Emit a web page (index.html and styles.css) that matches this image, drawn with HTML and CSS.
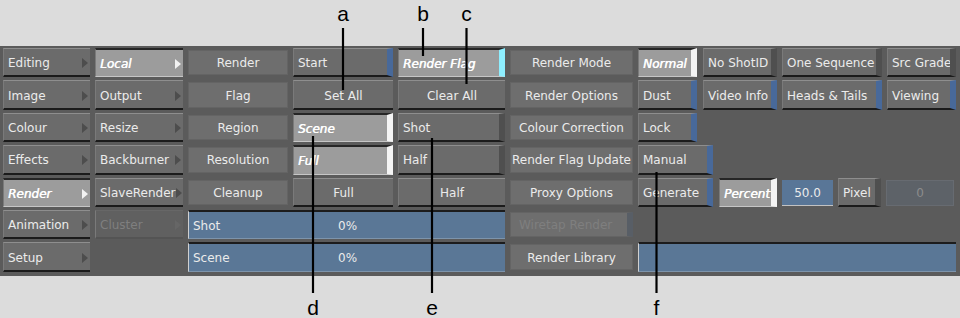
FILE: index.html
```html
<!DOCTYPE html>
<html lang="en">
<head>
  <meta charset="UTF-8">
  <title>Render</title>
  <link rel="stylesheet" href="styles.css">
</head>
<body>
  <div class="panel">
    <!-- row 1 -->
    <div class="btn arrow">Editing</div>
    <div class="btn arrow sel">Local</div>
    <div class="lbl">Render</div>
    <div class="btn tog on">Start</div>
    <div class="btn tog sel cyan">Render Flag</div>
    <div class="lbl">Render Mode</div>
    <div class="right">
      <div class="btn tog sel w59">Normal</div>
      <div class="btn tog w74">No ShotID</div>
      <div class="btn tog w100">One Sequence</div>
      <div class="btn tog w69">Src Grade</div>
    </div>

    <!-- row 2 -->
    <div class="btn arrow">Image</div>
    <div class="btn arrow">Output</div>
    <div class="lbl">Flag</div>
    <div class="btn center">Set All</div>
    <div class="btn center">Clear All</div>
    <div class="lbl">Render Options</div>
    <div class="right">
      <div class="btn tog on w59">Dust</div>
      <div class="btn tog on w74">Video Info</div>
      <div class="btn tog on w100">Heads &amp; Tails</div>
      <div class="btn tog on w69">Viewing</div>
    </div>

    <!-- row 3 -->
    <div class="btn arrow">Colour</div>
    <div class="btn arrow">Resize</div>
    <div class="lbl">Region</div>
    <div class="btn tog sel">Scene</div>
    <div class="btn tog">Shot</div>
    <div class="lbl">Colour Correction</div>
    <div class="right">
      <div class="btn tog on w59">Lock</div>
    </div>

    <!-- row 4 -->
    <div class="btn arrow">Effects</div>
    <div class="btn arrow">Backburner</div>
    <div class="lbl">Resolution</div>
    <div class="btn tog sel">Full</div>
    <div class="btn tog">Half</div>
    <div class="lbl">Render Flag Update</div>
    <div class="right">
      <div class="btn tog on w75">Manual</div>
    </div>

    <!-- row 5 -->
    <div class="btn arrow sel">Render</div>
    <div class="btn arrow">SlaveRender</div>
    <div class="lbl">Cleanup</div>
    <div class="btn center">Full</div>
    <div class="btn center">Half</div>
    <div class="lbl">Proxy Options</div>
    <div class="right">
      <div class="btn tog on w75">Generate</div>
      <div class="btn tog sel w58">Percent</div>
      <div class="field w51">50.0</div>
      <div class="btn tog w43">Pixel</div>
      <div class="field off w68">0</div>
    </div>

    <!-- row 6 -->
    <div class="btn arrow">Animation</div>
    <div class="btn arrow disabled">Cluster</div>
    <div class="bar"><span class="bar-name">Shot</span><span>0%</span></div>
    <div class="lbl disabled">Wiretap Render</div>
    <div class="right"></div>

    <!-- row 7 -->
    <div class="btn arrow">Setup</div>
    <div></div>
    <div class="bar"><span class="bar-name">Scene</span><span>0%</span></div>
    <div class="lbl">Render Library</div>
    <div class="bar"></div>
  </div>

  <svg class="callouts" width="960" height="318" viewBox="0 0 960 318">
    <g stroke="#000" stroke-width="2.2">
      <line x1="343" y1="28" x2="343" y2="90"/>
      <line x1="423" y1="28" x2="423" y2="56"/>
      <line x1="466.5" y1="28" x2="466.5" y2="84"/>
      <line x1="313" y1="136" x2="313" y2="293"/>
      <line x1="432" y1="138" x2="432" y2="293"/>
      <line x1="656.5" y1="172" x2="656.5" y2="293"/>
    </g>
    <g class="letter" text-anchor="middle">
      <text x="343" y="21">a</text>
      <text x="423" y="21">b</text>
      <text x="466.5" y="21">c</text>
      <text x="313" y="315">d</text>
      <text x="432" y="315">e</text>
      <text x="656.5" y="315">f</text>
    </g>
  </svg>
</body>
</html>
```

FILE: styles.css
```css
body {
  margin: 0;
  background-color: #dcdcdc;
  font-family: "DejaVu Sans", Verdana, sans-serif;
  position: relative;
  width: 960px;
  height: 318px;
  overflow: hidden;
}

.panel {
  margin-top: 46px;
  height: 230px;
  box-sizing: border-box;
  background-color: #5b5b5b;
  padding: 2px 4px 0 3px;
  display: grid;
  grid-template-columns: 87px 88px 100px 100px 107px 123px 318px;
  grid-template-rows: repeat(7, 29.4px);
  column-gap: 5px;
  row-gap: 3px;
  font-size: 12px;
  color: #ebebeb;
}

.btn {
  display: flex;
  align-items: center;
  box-sizing: border-box;
  padding: 2px 0 0 4px;
  background-color: #6b6b6b;
  border-top: 1px solid #8e8e8e;
  border-left: 1px solid #7a7a7a;
  border-bottom: 2px solid #1b1b1b;
  white-space: nowrap;
  overflow: hidden;
}

.btn.center {
  justify-content: center;
  padding-left: 0;
}

.arrow::after {
  content: "";
  margin-left: auto;
  margin-right: 2px;
  border-left: 6px solid #4d4d4d;
  border-top: 5px solid transparent;
  border-bottom: 5px solid transparent;
}

.tog {
  border-right: 6px solid #4f4f4f;
}

.tog.on {
  border-right-color: #48699a;
}

.sel {
  background-color: #9c9c9c;
  border-top: 2px solid #262626;
  border-bottom: 1px solid #c6c6c6;
  color: #fff;
  font-style: italic;
  text-shadow: 0.5px 0 0 #fff;
}

.sel.tog {
  border-right-color: #f4f4f4;
}

.sel.cyan {
  border-right-color: #8eeefe;
}

.arrow.sel::after {
  border-left-color: #f2f2f2;
}

.disabled {
  color: #7f7f7f;
  background-color: #606060;
  border-top-color: #676767;
  border-bottom-color: #545454;
}

.arrow.disabled::after {
  border-left-color: #666;
}

.lbl {
  display: flex;
  align-items: center;
  justify-content: center;
  margin: 2px 0;
  padding-top: 1px;
  background-color: #6e6e6e;
  border: 1px solid #646464;
  white-space: nowrap;
}

.lbl.disabled {
  justify-content: flex-start;
  padding-left: 8px;
  border-right: 6px solid #585e66;
}

.right {
  display: flex;
  gap: 5px;
}

.w43 { width: 43px; }
.w51 { width: 51px; margin-left: 1px; }
.w58 { width: 58px; margin-left: 1px; }
.w59 { width: 59px; }
.w68 { width: 68px; margin-left: 1px; }
.w69 { width: 69px; }
.w74 { width: 74px; margin-left: 1px; }
.w75 { width: 75px; }
.w100 { width: 100px; }

.field {
  display: flex;
  align-items: center;
  justify-content: center;
  box-sizing: border-box;
  margin: 2px 0 1px;
  padding-top: 1px;
  background-color: #597697;
  border-bottom: 1px solid #c2c2c2;
}

.field.off {
  background-color: #5d6268;
  border: 1px solid #676b71;
  color: #8c8c8c;
}

.bar {
  grid-column: span 3;
  display: flex;
  align-items: center;
  box-sizing: border-box;
  padding: 1px 0 0 4px;
  background-color: #5a7796;
  border-top: 2px solid #1c1c1c;
  border-left: 1px solid #d0d0d0;
  border-bottom: 1px solid #7d94ab;
}

.panel > .bar:last-child {
  grid-column: auto;
}

.bar-name {
  width: 145px;
}

.callouts {
  position: absolute;
  top: 0;
  left: 0;
  pointer-events: none;
}

.letter {
  font-family: "Liberation Sans", Arial, sans-serif;
  font-size: 21px;
  fill: #000;
}
```
